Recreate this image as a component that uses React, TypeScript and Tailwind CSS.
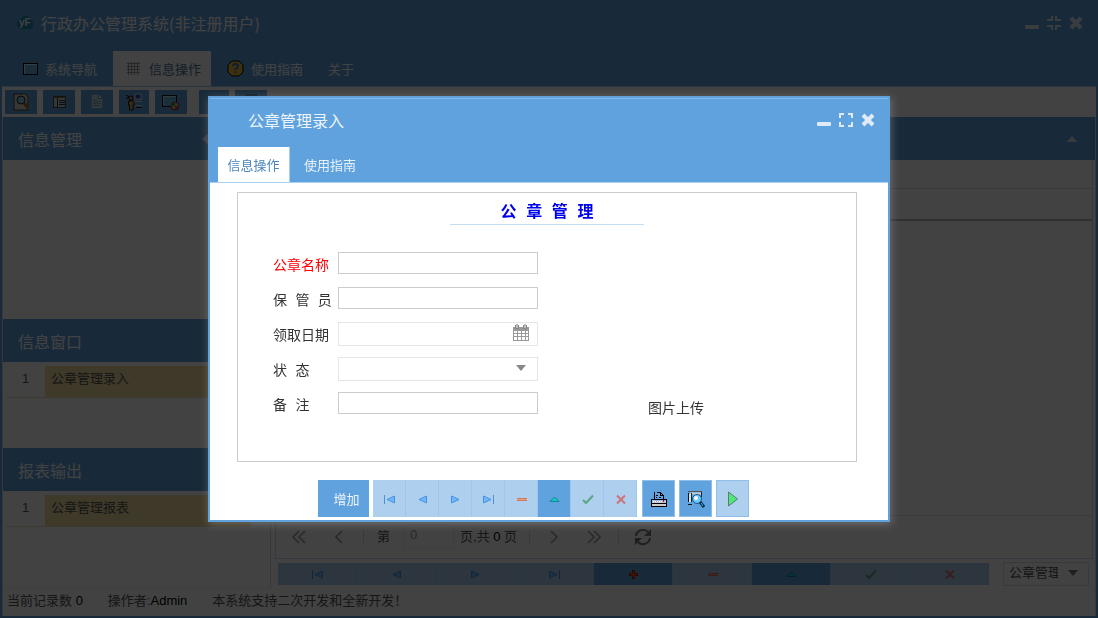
import React from "react";

const cjk = "font-['Noto_Sans_CJK_SC',sans-serif]";
const mixed = "font-['Liberation_Sans','Noto_Sans_CJK_SC',sans-serif]";
const form = "font-['Liberation_Mono','Noto_Sans_CJK_SC',monospace]";

type NavName = "first" | "prev" | "next" | "last" | "add" | "remove" | "edit" | "ok" | "cancel";

function NavIcon({ name }: { name: NavName }) {
    return (
        <svg width="16" height="16" viewBox="0 0 16 16" className="shrink-0" aria-hidden="true">
            {name === "first" && (
                <>
                    <path d="M3.5 4V13" stroke="#4a90dc" />
                    <path d="M13.5 5L6 8.5L13.5 12Z" fill="#6fb8ff" stroke="#4a90dc" />
                </>
            )}
            {name === "prev" && <path d="M12.5 5L5 8.5L12.5 12Z" fill="#6fb8ff" stroke="#4a90dc" />}
            {name === "next" && <path d="M4.5 5L12 8.5L4.5 12Z" fill="#6fb8ff" stroke="#4a90dc" />}
            {name === "last" && (
                <>
                    <path d="M3.5 5L11 8.5L3.5 12Z" fill="#6fb8ff" stroke="#4a90dc" />
                    <path d="M13.5 4V13" stroke="#4a90dc" />
                </>
            )}
            {name === "add" && (
                <>
                    <path d="M8.5 4V13M4 8.5H13" stroke="#a02000" strokeWidth="3" />
                    <path d="M8.5 5V12M5 8.5H12" stroke="#ff5a30" strokeWidth="1" />
                </>
            )}
            {name === "remove" && (
                <>
                    <rect x="4" y="7" width="10" height="3" fill="#f0a080" />
                    <path d="M4 7.5H14M4 9.5H14" stroke="#c9785f" />
                </>
            )}
            {name === "edit" && <path d="M8.5 6L13 10.500H4Z" fill="#18c4c8" stroke="#0b8890" />}
            {name === "ok" && <path d="M4 9L7 12L14 4.500" fill="none" stroke="#5aa583" strokeWidth="2" />}
            {name === "cancel" && <path d="M5 4.500L13 12.500M13 4.500L5 12.500" stroke="#cf7277" strokeWidth="2" />}
        </svg>
    );
}

const navItems: { name: NavName; label: string }[] = [
    { name: "first", label: "首记录" },
    { name: "prev", label: "上一条" },
    { name: "next", label: "下一条" },
    { name: "last", label: "末记录" },
    { name: "add", label: "新增" },
    { name: "remove", label: "删除" },
    { name: "edit", label: "编辑" },
    { name: "ok", label: "保存" },
    { name: "cancel", label: "取消" },
];

function WindowTools({ full }: { full?: boolean }) {
    return (
        <div className="flex items-center gap-[6px] text-[#dfeaf6]">
            <button aria-label="最小化">
                <svg width="16" height="16" viewBox="0 0 16 16" aria-hidden="true">
                    <rect x="1" y="10" width="14" height="4" rx="1" fill="currentColor" />
                </svg>
            </button>
            <button aria-label="最大化">
                <svg width="16" height="16" viewBox="0 0 16 16" fill="none" stroke="currentColor" strokeWidth="2" aria-hidden="true">
                    {full ? (
                        <path d="M6 1V5H1M10 1V5H15M6 15V11H1M10 15V11H15" />
                    ) : (
                        <path d="M2 6V2H6M10 2H14V6M14 10V14H10M6 14H2V10" />
                    )}
                </svg>
            </button>
            <button aria-label="关闭">
                <svg width="16" height="16" viewBox="0 0 16 16" stroke="currentColor" strokeWidth="4" aria-hidden="true">
                    <path d="M3 3L13 13M13 3L3 13" />
                </svg>
            </button>
        </div>
    );
}

function Logo() {
    return (
        <svg width="18" height="16" viewBox="0 0 18 16" aria-hidden="true">
            <path d="M4 14Q1 13 1 9Q1 5 4 5Q6 1 10 1Q14 1 15 5Q17 6 17 10Q17 13 13 14Z" fill="#1b86a8" />
            <text x="3" y="11" fontSize="10" fontWeight="700" fontFamily="Liberation Sans" fill="#fff">yF</text>
        </svg>
    );
}

function ToolIcon({ name }: { name: string }) {
    return (
        <svg width="18" height="18" viewBox="0 0 18 18" aria-hidden="true">
            {name === "search" && (
                <>
                    <path d="M2 1H14L16 4V17H2Z" fill="#d8d2c6" stroke="#444" />
                    <circle cx="9" cy="7" r="4" fill="#7cc8ea" stroke="#222" />
                    <path d="M12 10L16 15" stroke="#b06018" strokeWidth="3" />
                </>
            )}
            {name === "table" && (
                <>
                    <rect x="3.5" y="3.5" width="12" height="11" fill="#c8d4de" stroke="#444" />
                    <path d="M3 4.500H16" stroke="#a05a20" />
                    <path d="M7.500 5V15M9 7.500H15M9 9.500H15M9 11.500H15" stroke="#333" />
                </>
            )}
            {name === "page" && (
                <>
                    <path d="M3.5 1.5H10.500L14.500 5.500V15.500H3.500Z" fill="#b9dcf0" stroke="#7fa9c4" />
                    <path d="M10.500 1.500V5.500H14.500" fill="#fff" stroke="#5a8aa8" />
                    <path d="M5 6.500H9M5 8.500H13M5 10.500H13M5 12.500H13" stroke="#7fa9c4" />
                </>
            )}
            {name === "user" && (
                <>
                    <path d="M1 2L4 4L1 6" fill="none" stroke="#111" />
                    <circle cx="6" cy="5" r="2" fill="#e0a050" stroke="#111" />
                    <path d="M3.500 8H9V12H8V17H4.500V12H3.500Z" fill="#e0a050" stroke="#111" />
                    <rect x="10" y="1" width="6" height="5" fill="#3048d0" stroke="#ddd" />
                    <path d="M9 8.500H17M10 12.500H17" stroke="#ddd" />
                    <path d="M11 14.500H17" stroke="#222" />
                </>
            )}
            {name === "web" && (
                <>
                    <rect x="0.5" y="2.5" width="14" height="11" fill="#69b4da" stroke="#111" />
                    <path d="M1.5 12V3.500H14" fill="none" stroke="#bfe0f0" />
                    <circle cx="13" cy="13" r="4" fill="#d8c040" stroke="#702070" />
                    <path d="M13 9V13H9Q10 9 13 9" fill="#3c9a58" />
                    <path d="M13 13H17Q16 16 13 17Z" fill="#c03a70" />
                </>
            )}
            {name === "grid" && <path d="M3 2H15M3 4H15" stroke="#222" />}
        </svg>
    );
}

function PanelHeader({ title, children }: { title: string; children?: React.ReactNode }) {
    return (
        <div className="flex h-[43px] shrink-0 items-center justify-between bg-[#5fa2dd] pl-[15px]">
            <h2 className={`${cjk} text-[16px] leading-[24px] text-white`}>{title}</h2>
            {children}
        </div>
    );
}

function ReportList({ name }: { name: string }) {
    return (
        <table className="mt-1 ml-[3px] w-[245px] border-collapse text-[13px] leading-[20px] text-[#555]">
            <tbody>
                <tr className="h-[31px] border-b border-[#e6dcb8]">
                    <td className="w-[39px] pb-[4px] text-center">1</td>
                    <td className="bg-[#f0dc9c] pb-[4px] pl-[6px]">{name}</td>
                </tr>
            </tbody>
        </table>
    );
}

function Chevron({ double, right, label }: { double?: boolean; right?: boolean; label: string }) {
    return (
        <button aria-label={label} className="text-[#999]">
            <svg
                width="16"
                height="16"
                viewBox="0 0 16 16"
                fill="none"
                stroke="currentColor"
                strokeWidth="1.500"
                className={right ? "rotate-180" : ""}
                aria-hidden="true"
            >
                {double ? <path d="M8 2L2 8L8 14M14 2L8 8L14 14" /> : <path d="M11 2L5 8L11 14" />}
            </svg>
        </button>
    );
}

function Pager() {
    return (
        <div className="flex h-[43px] items-center border-t border-[#dbe6f0] pl-[15px] text-[13px] text-[#555]">
            <Chevron double label="第一页" />
            <div className="w-[24px]" />
            <Chevron label="上一页" />
            <div className="ml-[16px] h-[14px] w-px bg-[#ddd]" />
            <label htmlFor="page" className="ml-[13px]">第</label>
            <input
                id="page"
                defaultValue="0"
                className="ml-[14px] h-[24px] w-[50px] border border-[#eee] px-[5px] pb-[6px] text-[#999]"
            />
            <span className="ml-[6px]">页,共 <b className="font-normal text-black">0</b> 页</span>
            <div className="ml-[12px] h-[14px] w-px bg-[#ddd]" />
            <div className="w-[16px]" />
            <Chevron right label="下一页" />
            <div className="w-[24px]" />
            <Chevron double right label="最后一页" />
            <div className="ml-[16px] h-[14px] w-px bg-[#ddd]" />
            <button aria-label="刷新" className="ml-[15px] text-[#777]">
                <svg width="18" height="18" viewBox="0 0 18 18" fill="none" stroke="currentColor" strokeWidth="2" aria-hidden="true">
                    <path d="M2 8A7 7 0 0 1 14 4M16 10A7 7 0 0 1 4 14" />
                    <path d="M17 1V8H10ZM1 17V10H8Z" fill="currentColor" stroke="none" />
                </svg>
            </button>
        </div>
    );
}

const mainTab = "flex h-[35px] items-center whitespace-nowrap";
const toolButton = "flex h-[24px] items-center justify-center bg-[#5fa2dd]";

function MainWindow() {
    return (
        <div className={`${mixed} flex h-screen flex-col border-2 border-t-0 border-[#5fa2dd] bg-white`}>
            <header className="flex h-[87px] shrink-0 flex-col border-b border-[#9cc8ef] bg-[#5fa2dd]">
                <div className="flex h-[51px] items-center justify-between pr-[12px] pb-[5px] pl-[14px]">
                    <div className="flex items-center gap-[7px]">
                        <Logo />
                        <h1 className={`${cjk} text-[16px] text-white`}>行政办公管理系统(非注册用户)</h1>
                    </div>
                    <WindowTools full />
                </div>
                <nav className={`${cjk} flex text-[13px] text-white`}>
                    <button className={`${mainTab} w-[111px] gap-[6px] pl-[20px]`}>
                        <svg width="17" height="14" viewBox="0 0 17 14" className="shrink-0" aria-hidden="true">
                            <rect x="1.5" y="1.5" width="14" height="11" fill="#69aede" stroke="#000" />
                            <path d="M2.5 12V2.500H15" fill="none" stroke="#cfe8fa" />
                        </svg>
                        系统导航
                    </button>
                    <button className={`${mainTab} w-[98px] gap-[8px] bg-white pl-[13px] text-[#4678a5]`}>
                        <svg width="15" height="15" viewBox="0 0 15 15" stroke="#999" className="shrink-0" aria-hidden="true">
                            <path d="M2.500 1V14M5.500 1V14M8.500 1V14M11.500 1V14M1 2.500H14M1 5.500H14M1 8.500H14M1 11.500H14" />
                        </svg>
                        信息操作
                    </button>
                    <button className={`${mainTab} w-[105px] gap-[7px] pl-[16px]`}>
                        <svg width="17" height="17" viewBox="0 0 17 17" className="shrink-0" aria-hidden="true">
                            <path d="M5 1H12L16 5V12L12 16H5L1 12V5Z" fill="#f0b83c" stroke="#000" strokeWidth="1" />
                            <path d="M6 6Q6 4 8 4Q11 4 11 6Q11 8 8.500 9V10M8.500 11.500V13" fill="none" stroke="#3a7cc0" strokeWidth="2" />
                        </svg>
                        使用指南
                    </button>
                    <button className={`${mainTab} px-[12px]`}>关于</button>
                </nav>
            </header>

            <div className="flex h-[30px] shrink-0 items-center gap-[6px] pl-[3px]">
                <button aria-label="查询" className={`${toolButton} w-[32px]`}><ToolIcon name="search" /></button>
                <button aria-label="列表" className={`${toolButton} w-[32px]`}><ToolIcon name="table" /></button>
                <button aria-label="文档" className={`${toolButton} w-[32px]`}><ToolIcon name="page" /></button>
                <button aria-label="用户" className={`${toolButton} w-[30px]`}><ToolIcon name="user" /></button>
                <button aria-label="网络" className={`${toolButton} w-[32px]`}><ToolIcon name="web" /></button>
                <button aria-label="更多" className={`${toolButton} ml-[6px] w-[30px]`} />
                <button aria-label="表格" className={`${toolButton} w-[32px]`}><ToolIcon name="grid" /></button>
            </div>

            <div className="flex min-h-0 flex-1 border-x border-[#c5ddf3]">
                <aside className="flex w-[268px] shrink-0 flex-col border-r border-b border-[#c5ddf3] border-b-[#eee]">
                    <section className="h-[202px]">
                        <PanelHeader title="信息管理">
                            <svg width="8" height="14" viewBox="0 0 8 14" className="mr-[60px]" aria-hidden="true">
                                <path d="M8 0V14L0 7Z" fill="#d4e2ef" />
                            </svg>
                        </PanelHeader>
                    </section>
                    <section className="h-[129px]">
                        <PanelHeader title="信息窗口" />
                        <ReportList name="公章管理录入" />
                    </section>
                    <section className="flex-1">
                        <PanelHeader title="报表输出" />
                        <ReportList name="公章管理报表" />
                    </section>
                </aside>

                <main className="ml-[4px] flex min-w-0 flex-1 flex-col">
                    <PanelHeader title="">
                        <svg width="12" height="6" viewBox="0 0 12 6" className="mr-[17px]" aria-hidden="true">
                            <path d="M1 6L6 0L11 6Z" fill="#d4e2ef" />
                        </svg>
                    </PanelHeader>
                    <div className="mr-[2px] flex flex-1 flex-col border-x border-b border-[#c5ddf3]">
                        <div className="h-[29px] border-b border-[#c5ddf3]" />
                        <div className="h-[32px] border-b-2 border-[#bbb]" />
                        <div className="flex-1" />
                        <Pager />
                    </div>
                    <div className="flex h-[30px] items-center pr-[6px] pl-[3px]">
                        <div className="flex h-[22px] flex-1">
                            {navItems.map((item) => (
                                <button
                                    key={item.name}
                                    aria-label={item.label}
                                    className={`flex flex-1 items-center justify-center border-r border-[#9cc8ef] ${
                                        item.name === "add" || item.name === "edit" ? "bg-[#5fa2dd]" : "bg-[#afcfee]"
                                    }`}
                                >
                                    <NavIcon name={item.name} />
                                </button>
                            ))}
                        </div>
                        <div className="relative ml-[14px]">
                            <select
                                aria-label="当前窗口"
                                className="block h-[24px] w-[86px] appearance-none border border-[#e0e0e0] bg-white pr-[30px] pb-[6px] pl-[5px] text-[13px] text-[#555]"
                            >
                                <option>公章管理录入</option>
                            </select>
                            <svg width="10" height="6" viewBox="0 0 10 6" className="pointer-events-none absolute top-[8px] right-[11px]" aria-hidden="true">
                                <path d="M0 0H10L5 6Z" fill="#777" />
                            </svg>
                        </div>
                    </div>
                </main>
            </div>

            <footer className="flex h-[27px] shrink-0 items-center gap-[25px] border-x border-[#c5ddf3] pb-[4px] pl-[4px] text-[13px] leading-[20px] text-[#555]">
                <span>当前记录数 <b className="font-normal text-black">0</b></span>
                <span>操作者:<b className="font-normal text-black">Admin</b></span>
                <span>本系统支持二次开发和全新开发！</span>
            </footer>
        </div>
    );
}

function Row({ id, label, required, children }: { id: string; label: string; required?: boolean; children: React.ReactNode }) {
    return (
        <div className="flex h-[24px] items-start">
            <label htmlFor={id} className={`w-[65px] text-[14px] leading-[28px] whitespace-nowrap ${required ? "text-[#f00]" : "text-[#333]"}`}>
                {label}
            </label>
            <div className="relative w-[200px]">{children}</div>
        </div>
    );
}

const textInput = "block h-[22px] w-full border border-[#ccc] bg-white px-1 text-[14px]";
const comboInput = "block h-[24px] w-full appearance-none border border-[#e6e6e6] bg-white px-1 text-[14px]";

function SealForm() {
    return (
        <section className={`${form} mr-[31px] ml-[27px] mt-[9px] h-[270px] border border-[#ccc]`}>
            <h3 className="mx-auto h-[32px] w-[194px] border-b border-[#c5ddf3] text-center text-[16px] leading-[40px] font-bold text-[#0000f0]">
                公 章 管 理
            </h3>
            <div className="mt-[27px] ml-[35px] flex items-end gap-[110px]">
                <div className="flex flex-col gap-[11px]">
                    <Row id="name" label="公章名称" required>
                        <input id="name" className={textInput} />
                    </Row>
                    <Row id="keeper" label="保 管 员">
                        <input id="keeper" className={textInput} />
                    </Row>
                    <Row id="date" label="领取日期">
                        <input id="date" className={comboInput} />
                        <svg width="16" height="17" viewBox="0 0 16 17" className="absolute top-[2px] right-[9px]" aria-hidden="true">
                            <path d="M0 3H16V17H0Z" fill="#999" />
                            <path d="M2 1H6V5H2ZM10 1H14V5H10Z" fill="#888" />
                            <path d="M3 0H5V4H3ZM11 0H13V4H11Z" fill="#bbb" />
                            <path d="M1 7H4V9H1ZM5 7H8V9H5ZM9 7H12V9H9ZM13 7H15V9H13ZM1 10H4V12H1ZM5 10H8V12H5ZM9 10H12V12H9ZM13 10H15V12H13ZM1 13H4V16H1ZM5 13H8V16H5ZM9 13H12V16H9ZM13 13H15V16H13Z" fill="#fff" />
                        </svg>
                    </Row>
                    <Row id="status" label="状 态">
                        <select id="status" className={comboInput}>
                            <option></option>
                        </select>
                        <svg width="10" height="6" viewBox="0 0 10 6" className="pointer-events-none absolute top-[8px] right-[12px]" aria-hidden="true">
                            <path d="M0 0H10L5 6Z" fill="#888" />
                        </svg>
                    </Row>
                    <Row id="remark" label="备 注">
                        <input id="remark" className={textInput} />
                    </Row>
                </div>
                <span className="text-[14px] leading-[14px] text-[#333]">图片上传</span>
            </div>
        </section>
    );
}

const actionButton = "flex h-[37px] w-[33px] items-center justify-center border border-[#8fbfe9]";

function SealDialog() {
    return (
        <div
            role="dialog"
            aria-label="公章管理录入"
            className={`${cjk} w-[682px] border-2 border-[#5fa2dd] bg-white shadow-[1px_2px_8px_rgba(160,160,160,0.5)]`}
        >
            <div className="border-b border-[#a8d0f2] bg-[#5fa2dd]">
                <div className="flex h-[49px] items-center justify-between border-t border-[#84b8e8] pr-[12px] pb-[6px] pl-[38px]">
                    <h2 className="text-[16px] text-[#eef4fb]">公章管理录入</h2>
                    <WindowTools />
                </div>
                <div className="flex pl-[8px] text-[13px]">
                    <button className="h-[35px] w-[72px] border-r border-[#a8d0f2] bg-white text-[#4a86bd]">信息操作</button>
                    <button className="h-[35px] w-[80px] text-[#e8f1fa]">使用指南</button>
                </div>
            </div>
            <SealForm />
            <div className="mt-[18px] mb-[3px] flex pl-[108px]">
                <button className="mr-[4px] h-[37px] w-[51px] bg-[#5fa2dd] pl-[6px] text-[13px] text-[#eef4fb]">增加</button>
                <div className="mr-[5px] flex">
                    {navItems
                        .filter((item) => item.name !== "add")
                        .map((item) => (
                            <button
                                key={item.name}
                                aria-label={item.label}
                                className={`flex h-[37px] w-[33px] items-center justify-center border-r border-[#9cc8ef] ${
                                    item.name === "edit" ? "bg-[#5fa2dd]" : "bg-[#afcfee]"
                                }`}
                            >
                                <NavIcon name={item.name} />
                            </button>
                        ))}
                </div>
                <div className="flex gap-[4px]">
                    <button aria-label="打印" className={`${actionButton} bg-[#5fa2dd]`}>
                        <svg width="17" height="16" viewBox="0 0 17 16" shapeRendering="crispEdges" className="shrink-0" aria-hidden="true">
                            <path d="M4 8V1H5M7 1H10L13 4V8" fill="none" stroke="#000" />
                            <path d="M10 1V4H13M6 4H8M6 6H7M9 6H11" fill="none" stroke="#000" />
                            <path d="M1 8H16V15H1Z" fill="#ccc" stroke="#000" strokeWidth="1" />
                            <path d="M2 9H15V11H2Z" fill="#9ab8f0" />
                            <path d="M3 10H4M5 10H6M7 10H8M9 10H10M11 10H12" stroke="#fff" />
                            <path d="M1 12H16" stroke="#000" />
                            <rect x="13" y="9" width="1" height="2" fill="#e00" />
                        </svg>
                    </button>
                    <button aria-label="预览" className={`${actionButton} bg-[#5fa2dd]`}>
                        <svg width="18" height="18" viewBox="0 0 18 18" className="shrink-0" aria-hidden="true">
                            <path d="M1 1.500H15" stroke="#555" />
                            <path d="M3 3.500H14" stroke="#ccc" strokeWidth="2" />
                            <path d="M2 4H4V12H2Z" fill="#bfe8ff" />
                            <path d="M4.500 3V12M14.500 2V7" stroke="#222" />
                            <path d="M1.500 3V12M1 14.500H5" stroke="#111" />
                            <circle cx="10" cy="9" r="4.500" fill="#6cc8fa" stroke="#145a8c" />
                            <circle cx="9" cy="8" r="2" fill="#fff" />
                            <path d="M13 12L17 17" stroke="#0a2c50" strokeWidth="3" />
                            <path d="M14 13L16 16" stroke="#3ab4e8" strokeWidth="1" />
                        </svg>
                    </button>
                    <button aria-label="执行" className={`${actionButton} bg-[#afcfee]`}>
                        <svg width="12" height="16" viewBox="0 0 12 16" className="shrink-0" aria-hidden="true">
                            <path d="M1.500 1L10.500 8L1.500 15Z" fill="#50e878" stroke="#5a7a72" />
                        </svg>
                    </button>
                </div>
            </div>
        </div>
    );
}

export default function App() {
    return (
        <div>
            <MainWindow />
            <div className="fixed inset-0 flex items-center justify-center bg-black/74">
                <SealDialog />
            </div>
        </div>
    );
}
